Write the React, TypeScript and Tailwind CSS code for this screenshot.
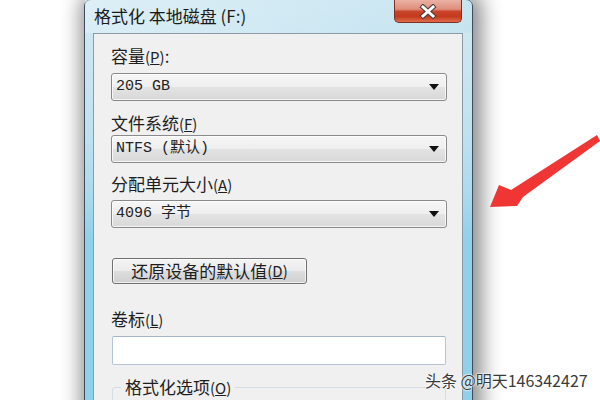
import React from "react";

const CJK = '"Noto Sans CJK SC", "Noto Sans", sans-serif';
const MONO = '"Liberation Mono", "Noto Sans CJK SC", monospace';

function Label({ text, k, colon }: { text: string; k: string; colon?: boolean }) {
  return (
    <div className="h-[20px] leading-[20px] text-[17px] text-[#1e1e1e] whitespace-nowrap" style={{ fontFamily: CJK }}>
      {text}
      <span className="text-[15px]">
        (<span className="underline">{k}</span>)
      </span>
      {colon ? ":" : ""}
    </div>
  );
}

function Combo({ children }: { children: React.ReactNode }) {
  return (
    <div className="h-[28px] w-[336px] rounded-[3px] border border-[#8a8a8a] bg-[linear-gradient(to_bottom,#f6f6f6_0%,#efefef_48%,#e3e3e3_52%,#d8d8d8_100%)] shadow-[inset_0_0_0_1px_rgba(255,255,255,0.75)] flex items-center justify-between pl-[4px] pr-[7px]">
      <span className="text-[15px] text-[#222] whitespace-pre" style={{ fontFamily: MONO }}>
        {children}
      </span>
      <svg width="10" height="6" viewBox="0 0 10 6">
        <polygon points="0,0 10,0 5,6" fill="#111" />
      </svg>
    </div>
  );
}

export default function App() {
  return (
    <div className="relative w-[600px] h-[400px] overflow-hidden bg-white">
      <div className="relative ml-[84px] mt-[-1px] w-[389px] h-[440px] rounded-t-[7px] border border-[#3d4d5c] bg-[linear-gradient(to_bottom,#d3e9f2_0%,#bfe2f0_30%,#a9daee_45%,#8fd0ea_55%,#8fd0ea_100%)] shadow-[3px_0_20px_6px_rgba(0,0,0,0.45)] flex flex-col">
        <div
          className="h-[37px] pl-[9px] pt-[6px] leading-[20px] text-[17px] text-[#1a1a1a] whitespace-nowrap bg-[linear-gradient(to_right,rgba(230,244,250,0.5),rgba(160,215,238,0.2))]"
          style={{ fontFamily: CJK }}
        >
          格式化 本地磁盘 (F:)
        </div>
        <div className="absolute top-0 right-[10px] w-[68px] h-[23px] rounded-b-[5px] border border-t-0 border-[#7d2f22] bg-[linear-gradient(to_bottom,#eab2a4_0%,#df8d79_42%,#c9442a_52%,#c43a1e_75%,#de6d4c_100%)] flex items-center justify-center">
          <svg width="18" height="15" viewBox="0 0 18 15">
            <path d="M4 3 L14 12 M14 3 L4 12" stroke="#4a3a38" strokeWidth="5" strokeLinecap="square" />
            <path d="M4 3 L14 12 M14 3 L4 12" stroke="#ffffff" strokeWidth="3" strokeLinecap="square" />
          </svg>
        </div>
        <div className="ml-[8px] mr-[9px] flex-1 border border-[#8e9aa6] bg-[#f0f0f0] flex flex-col items-start pl-[17px] pr-[15px]">
          <div className="mt-[12px]">
            <Label text="容量" k="P" colon />
          </div>
          <div className="mt-[7px]">
            <Combo>205 GB</Combo>
          </div>
          <div className="mt-[12px]">
            <Label text="文件系统" k="F" />
          </div>
          <div className="mt-[2px]">
            <Combo>NTFS (默认)</Combo>
          </div>
          <div className="mt-[11px]">
            <Label text="分配单元大小" k="A" />
          </div>
          <div className="mt-[6px]">
            <Combo>4096 字节</Combo>
          </div>
          <div
            className="mt-[30px] ml-[1px] w-[195px] h-[26px] rounded-[3px] border border-[#707070] bg-[linear-gradient(to_bottom,#f4f4f4_0%,#ebebeb_48%,#dddddd_52%,#cfcfcf_100%)] shadow-[inset_0_0_0_1px_rgba(255,255,255,0.7)] flex items-center justify-center text-[17px] text-[#1e1e1e] whitespace-nowrap"
            style={{ fontFamily: CJK }}
          >
            还原设备的默认值
            <span className="text-[15px]">
              (<span className="underline">D</span>)
            </span>
          </div>
          <div className="mt-[25px]">
            <Label text="卷标" k="L" />
          </div>
          <div className="mt-[7px] ml-[1px] w-[334px] h-[29px] rounded-[2px] border border-[#b4c4d4] border-t-[#a5b5c6] bg-white" />
          <fieldset className="mt-[12px] ml-[1px] w-[334px] h-[60px] rounded-[3px] border border-[#d5dde3] px-[8px]">
            <legend
              className="px-[4px] h-[20px] leading-[20px] text-[17px] text-[#1e1e1e] whitespace-nowrap"
              style={{ fontFamily: CJK }}
            >
              格式化选项
              <span className="text-[15px]">
                (<span className="underline">O</span>)
              </span>
            </legend>
          </fieldset>
        </div>
      </div>

      <svg className="absolute left-[480px] top-[120px]" width="120" height="100" viewBox="480 120 120 100">
        <polygon
          points="597,135 600,141 523,197 517,206 490,207 499,185 511,190"
          fill="#f03535"
        />
      </svg>

      <div
        className="absolute left-[425px] top-[370px] text-[16px] leading-[20px] text-[#3a3a3a] whitespace-nowrap [text-shadow:0_0_2px_#fff,0_0_2px_#fff,0_0_2px_#fff]"
        style={{ fontFamily: CJK }}
      >
        头条 @明天146342427
      </div>
    </div>
  );
}
